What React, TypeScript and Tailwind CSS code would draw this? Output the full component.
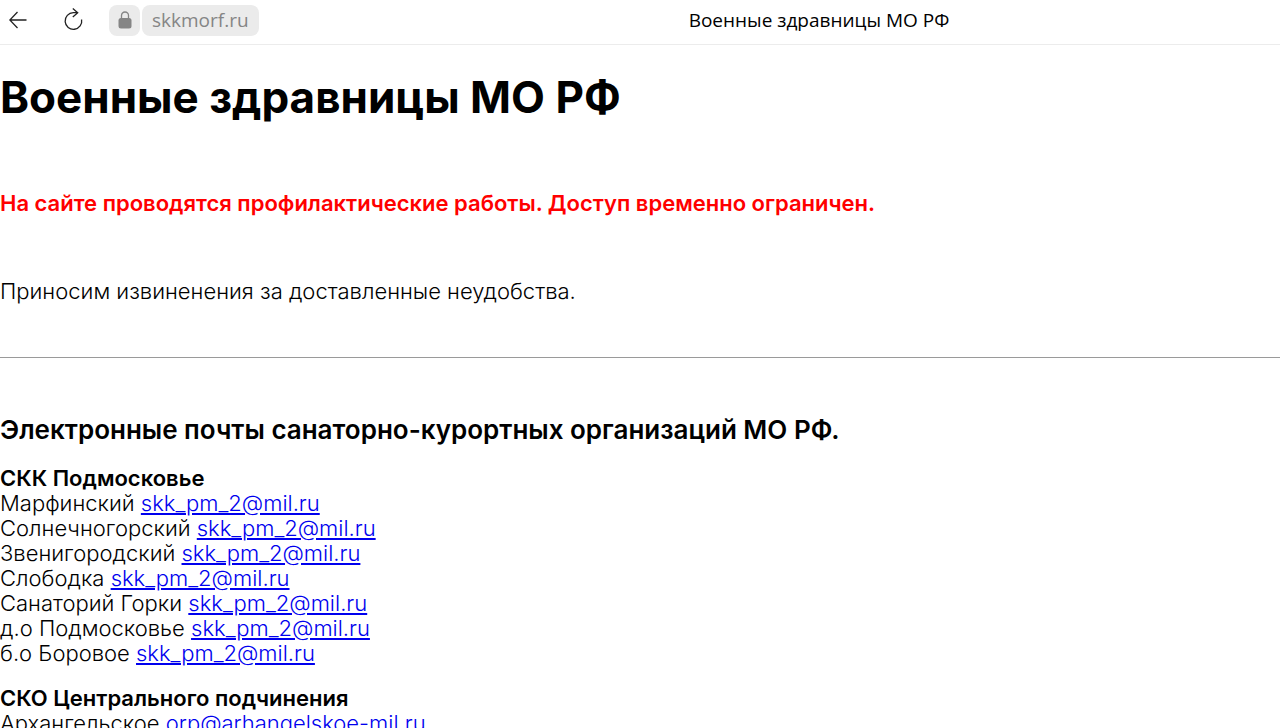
type Contact = { name: string; email: string };
type Group = { title: string; contacts: Contact[] };

const GROUPS: Group[] = [
  {
    title: "СКК Подмосковье",
    contacts: [
      { name: "Марфинский", email: "skk_pm_2@mil.ru" },
      { name: "Солнечногорский", email: "skk_pm_2@mil.ru" },
      { name: "Звенигородский", email: "skk_pm_2@mil.ru" },
      { name: "Слободка", email: "skk_pm_2@mil.ru" },
      { name: "Санаторий Горки", email: "skk_pm_2@mil.ru" },
      { name: "д.о Подмосковье", email: "skk_pm_2@mil.ru" },
      { name: "б.о Боровое", email: "skk_pm_2@mil.ru" },
    ],
  },
  {
    title: "СКО Центрального подчинения",
    contacts: [{ name: "Архангельское", email: "orp@arhangelskoe-mil.ru" }],
  },
];

export default function App() {
  return (
    <div className="min-h-screen bg-white text-black">
      <BrowserBar />
      <main className="font-['Inter',sans-serif] text-[22px] leading-[25px] font-light">
        <h1 className="pt-[27px] text-[44px] leading-[50px] font-bold">
          Военные здравницы МО РФ
        </h1>
        <p className="mt-[69px] font-semibold text-[#ff0000]">
          На сайте проводятся профилактические работы. Доступ временно
          ограничен.
        </p>
        <p className="mt-[63px]">
          Приносим извиненения за доставленные неудобства.
        </p>
        <hr className="mt-[53px] border-[#9a9a9a]" />
        <h2 className="mt-14 text-[26px] leading-8 font-semibold">
          Электронные почты санаторно-курортных организаций МО РФ.
        </h2>
        {GROUPS.map((group) => (
          <section key={group.title} className="mt-5">
            <h3 className="font-semibold">{group.title}</h3>
            <ul>
              {group.contacts.map((contact) => (
                <li key={contact.name}>
                  {contact.name}{" "}
                  <a
                    href={`mailto:${contact.email}`}
                    className="text-[#0000ee] underline"
                  >
                    {contact.email}
                  </a>
                </li>
              ))}
            </ul>
          </section>
        ))}
      </main>
    </div>
  );
}

function BrowserBar() {
  return (
    <header className="grid h-[45px] grid-cols-[1fr_auto_1fr] border-b border-[#ececec] pb-1 font-['Open_Sans','Noto_Sans',sans-serif] text-[19px] leading-6">
      <div className="flex items-center pl-2">
        <button aria-label="Назад" className="p-px">
          <svg
            width="18"
            height="18"
            viewBox="0 0 18 18"
            fill="none"
            stroke="#222"
            strokeWidth="1.3"
          >
            <path d="M17.5 9H1M8.5 1 .8 9l7.7 8" />
          </svg>
        </button>
        <button aria-label="Обновить" className="ml-9">
          <svg
            width="20"
            height="24"
            viewBox="0 0 20 24"
            fill="none"
            stroke="#222"
            strokeWidth="1.3"
          >
            <path d="M17.6 11.5A8.3 8.3 0 1 1 9.3 4.7H14M8.8 .6l4.9 4.1-4.9 4.3" />
          </svg>
        </button>
        <button
          aria-label="Сведения о сайте"
          className="ml-[25px] flex h-[31px] w-[31px] items-center justify-center rounded-lg bg-[#ebebeb]"
        >
          <svg width="14" height="18" viewBox="0 0 14 18" fill="none">
            <rect x="0.5" y="7" width="13" height="10.5" rx="2.5" fill="#858585" />
            <path
              d="M3.5 8V4.5a3.5 3.5 0 0 1 7 0V8"
              stroke="#858585"
              strokeWidth="1.3"
            />
          </svg>
        </button>
        <button className="ml-[2px] h-[31px] rounded-lg bg-[#ebebeb] px-[10px] text-[#858585]">
          skkmorf.ru
        </button>
      </div>
      <div className="self-center pl-[358px]">Военные здравницы МО РФ</div>
      <div />
    </header>
  );
}
